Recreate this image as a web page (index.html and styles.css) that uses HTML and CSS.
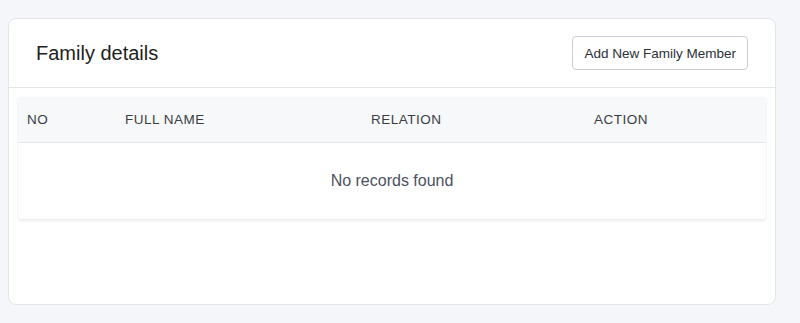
FILE: index.html
```html
<!DOCTYPE html>
<html>
<head>
<meta charset="utf-8">
<link rel="stylesheet" href="styles.css">
</head>
<body>
<div class="card">
  <div class="card-header">
    <h2 class="title">Family details</h2>
    <button class="btn">Add New Family Member</button>
  </div>
  <div class="card-body">
    <div class="table-wrap">
      <table class="table">
        <thead>
          <tr>
            <th class="c-no">NO</th>
            <th class="c-name">FULL NAME</th>
            <th class="c-rel">RELATION</th>
            <th class="c-act">ACTION</th>
          </tr>
        </thead>
        <tbody>
          <tr><td colspan="4" class="empty">No records found</td></tr>
        </tbody>
      </table>
    </div>
  </div>
</div>
</body>
</html>
```

FILE: styles.css
```css
html, body { margin: 0; padding: 0; }
body {
  background: #f5f6fa;
  font-family: "Liberation Sans", Arial, Helvetica, sans-serif;
  padding: 18px 24px 18px 8px;
}
.card {
  background: #fff;
  border: 1px solid #e3e5ea;
  border-radius: 8px;
  height: 287px;
  box-sizing: border-box;
  display: flex;
  flex-direction: column;
}
.card-header {
  display: flex;
  align-items: center;
  justify-content: space-between;
  padding: 17px 27px 17px 27px;
  border-bottom: 1px solid #e3e5ea;
}
.title {
  margin: 0;
  font-size: 20px;
  font-weight: 400;
  color: #1e1e1e;
}
.btn {
  font-family: inherit;
  font-size: 13.5px;
  color: #2b2f38;
  background: #fff;
  border: 1px solid #c9cdd5;
  border-radius: 4px;
  height: 34px;
  padding: 0 11px;
}
.card-body {
  padding: 9px 9px;
}
.table-wrap {
  background: #fff;
  border-radius: 4px;
  box-shadow: 0 2px 3px rgba(0,0,0,0.08), 0 0 1px rgba(0,0,0,0.05);
  overflow: hidden;
}
.table {
  width: 100%;
  border-collapse: collapse;
  table-layout: fixed;
}
th {
  background: #f7f8fa;
  text-align: left;
  font-weight: 400;
  font-size: 13.5px;
  letter-spacing: 0.5px;
  color: #3a3d44;
  height: 45px;
  padding: 0 0 0 9px;
  border-bottom: 1px solid #e6e8ec;
}
.c-no { width: 89px; }
.c-name { width: 237px; }
.c-rel { width: 214px; }
.empty {
  text-align: center;
  font-size: 16px;
  color: #4b5160;
  height: 76px;
  padding: 0;
}
```
